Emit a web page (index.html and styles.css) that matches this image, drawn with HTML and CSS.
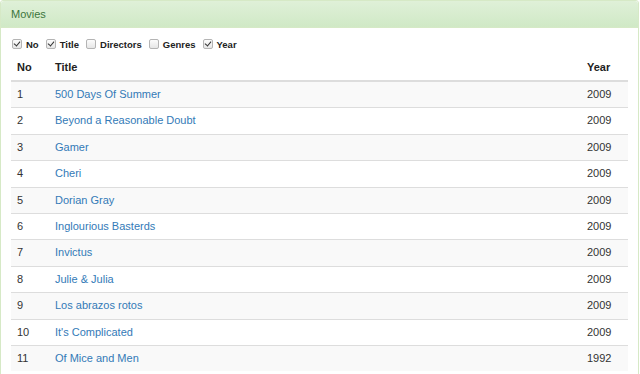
FILE: index.html
```html
<!DOCTYPE html>
<html>
<head>
<meta charset="utf-8">
<link rel="stylesheet" href="styles.css">
</head>
<body>
<div class="panel">
  <div class="panel-heading">Movies</div>
  <div class="panel-body">
    <div class="toggles">
      <label class="toggle"><input type="checkbox" checked>No</label>
      <label class="toggle"><input type="checkbox" checked>Title</label>
      <label class="toggle"><input type="checkbox">Directors</label>
      <label class="toggle"><input type="checkbox">Genres</label>
      <label class="toggle"><input type="checkbox" checked>Year</label>
    </div>
    <table class="movies">
      <colgroup><col class="c-no"><col class="c-title"><col class="c-year"></colgroup>
      <thead>
        <tr><th>No</th><th>Title</th><th>Year</th></tr>
      </thead>
      <tbody>
        <tr><td>1</td><td><a href="#">500 Days Of Summer</a></td><td>2009</td></tr>
        <tr><td>2</td><td><a href="#">Beyond a Reasonable Doubt</a></td><td>2009</td></tr>
        <tr><td>3</td><td><a href="#">Gamer</a></td><td>2009</td></tr>
        <tr><td>4</td><td><a href="#">Cheri</a></td><td>2009</td></tr>
        <tr><td>5</td><td><a href="#">Dorian Gray</a></td><td>2009</td></tr>
        <tr><td>6</td><td><a href="#">Inglourious Basterds</a></td><td>2009</td></tr>
        <tr><td>7</td><td><a href="#">Invictus</a></td><td>2009</td></tr>
        <tr><td>8</td><td><a href="#">Julie &amp; Julia</a></td><td>2009</td></tr>
        <tr><td>9</td><td><a href="#">Los abrazos rotos</a></td><td>2009</td></tr>
        <tr><td>10</td><td><a href="#">It's Complicated</a></td><td>2009</td></tr>
        <tr><td>11</td><td><a href="#">Of Mice and Men</a></td><td>1992</td></tr>
      </tbody>
    </table>
  </div>
</div>
</body>
</html>
```
FILE: styles.css
```css
html, body {
  margin: 0;
  padding: 0;
  background: #fff;
  font-family: "Liberation Sans", Arial, sans-serif;
  color: #333;
  font-size: 11px;
}
.panel {
  width: 637px;
  border: 1px solid #d6e9c6;
  border-radius: 3px;
  background: #fff;
}
.panel-heading {
  height: 26px;
  line-height: 26px;
  padding: 0 10px;
  color: #3c763d;
  font-size: 11px;
  background: linear-gradient(to bottom, #dff0d8 0%, #d0e9c6 100%);
  border-bottom: 1px solid #d6e9c6;
  border-radius: 3px 3px 0 0;
}
.panel-body {
  padding: 10px;
}
.toggles {
  display: flex;
  align-items: center;
  height: 12px;
  margin: 0 0 4px 1px;
}
.toggle {
  display: flex;
  align-items: center;
  font-weight: bold;
  font-size: 9.5px;
  margin-right: 7px;
  color: #222;
}
.toggle input {
  appearance: none;
  -webkit-appearance: none;
  width: 10px;
  height: 10px;
  margin: 0 4px 0 0;
  border: 1px solid #b4b4b4;
  border-radius: 2px;
  background: linear-gradient(#fcfcfc, #e6e6e6);
  position: relative;
  box-sizing: border-box;
}
.toggle input:checked::after {
  content: "";
  position: absolute;
  left: 2px;
  top: 0px;
  width: 3px;
  height: 5px;
  border: solid #333;
  border-width: 0 1.5px 1.5px 0;
  transform: rotate(40deg);
}
.movies {
  width: 617px;
  border-collapse: collapse;
  table-layout: fixed;
}
.c-no { width: 38px; }
.c-year { width: 47px; }
.movies th {
  text-align: left;
  font-weight: bold;
  font-size: 11px;
  color: #222;
  padding: 6px 6px;
  line-height: 14px;
  border-bottom: 2px solid #ddd;
}
.movies td {
  padding: 6px 6px;
  line-height: 13.4px;
  border-top: 1px solid #ddd;
  color: #333;
}
.movies tbody tr:first-child td {
  border-top: 0;
}
.movies tbody tr:nth-child(odd) td {
  background: #f9f9f9;
}
.movies a {
  color: #337ab7;
  text-decoration: none;
}
```
